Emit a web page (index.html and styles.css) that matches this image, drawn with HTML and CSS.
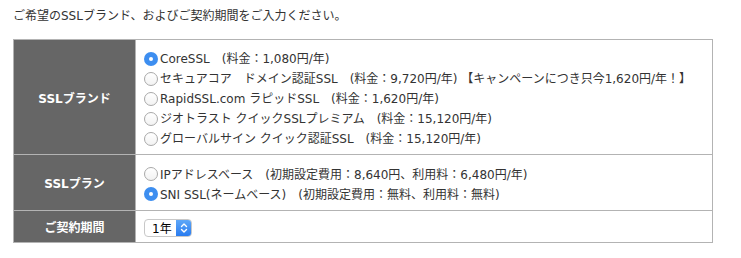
FILE: index.html
```html
<!DOCTYPE html>
<html lang="ja">
<head>
<meta charset="utf-8">
<link rel="stylesheet" href="styles.css">
</head>
<body>
<div class="page">
  <p class="lead">ご希望のSSLブランド、およびご契約期間をご入力ください。</p>
  <table class="form">
    <tr class="row-brand">
      <th>SSLブランド</th>
      <td>
        <label class="opt"><span class="radio on"></span>CoreSSL　(料金：1,080円/年)</label>
        <label class="opt"><span class="radio"></span>セキュアコア　ドメイン認証SSL　(料金：9,720円/年) 【キャンペーンにつき只今1,620円/年！】</label>
        <label class="opt"><span class="radio"></span>RapidSSL.com ラピッドSSL　(料金：1,620円/年)</label>
        <label class="opt"><span class="radio"></span>ジオトラスト クイックSSLプレミアム　(料金：15,120円/年)</label>
        <label class="opt"><span class="radio"></span>グローバルサイン クイック認証SSL　(料金：15,120円/年)</label>
      </td>
    </tr>
    <tr class="row-plan">
      <th>SSLプラン</th>
      <td>
        <label class="opt"><span class="radio"></span>IPアドレスベース　(初期設定費用：8,640円、利用料：6,480円/年)</label>
        <label class="opt"><span class="radio on"></span>SNI SSL(ネームベース)　(初期設定費用：無料、利用料：無料)</label>
      </td>
    </tr>
    <tr class="row-term">
      <th>ご契約期間</th>
      <td>
        <div class="select">
          <span class="select-value">1年</span>
          <span class="select-btn">
            <svg width="8" height="12" viewBox="0 0 8 12"><path d="M1.5 4.5 L4 2 L6.5 4.5 M1.5 7.5 L4 10 L6.5 7.5" fill="none" stroke="#fff" stroke-width="1.4" stroke-linecap="round" stroke-linejoin="round"/></svg>
          </span>
        </div>
      </td>
    </tr>
  </table>
</div>
</body>
</html>
```

FILE: styles.css
```css
html, body {
  margin: 0;
  padding: 0;
  background: #fff;
}
body {
  font-family: "DejaVu Sans", "Noto Sans CJK JP", sans-serif;
  font-size: 12px;
  color: #333;
}
.page {
  padding: 8px 13px 0 13px;
}
.lead {
  margin: 0;
  line-height: 17px;
  height: 31px;
}
.form {
  border-collapse: collapse;
  width: 700px;
}
.form th, .form td {
  border: 1px solid #b3b3b3;
}
.form th {
  width: 121px;
  background: #666;
  color: #fff;
  font-weight: bold;
  text-align: center;
  vertical-align: middle;
  padding: 0;
}
.form td {
  padding: 0 0 0 8px;
  vertical-align: middle;
}
.row-brand td {
  height: 113px;
  padding-top: 1px;
}
.row-plan td {
  height: 54px;
  padding-top: 1px;
}
.row-term td {
  height: 31px;
}
.opt {
  display: flex;
  align-items: center;
  height: 20px;
  white-space: nowrap;
}
.radio {
  box-sizing: border-box;
  width: 14px;
  height: 14px;
  border-radius: 50%;
  border: 1px solid #a9a9a9;
  background: linear-gradient(#fff, #f2f2f2);
  margin: 0 2px 0 0;
  flex: none;
  position: relative;
  top: 1px;
}
.radio.on {
  border: none;
  background: #3d8ef0;
}
.radio.on::after {
  content: "";
  position: absolute;
  left: 5px;
  top: 5px;
  width: 4px;
  height: 4px;
  border-radius: 50%;
  background: #fff;
}
.select {
  display: inline-flex;
  align-items: stretch;
  box-sizing: border-box;
  width: 48px;
  height: 18px;
  border: 1px solid #c8c8c8;
  border-radius: 4px;
  background: #fff;
  overflow: hidden;
  vertical-align: middle;
  position: relative;
  top: 1px;
}
.select-value {
  flex: 1;
  display: flex;
  align-items: center;
  padding-left: 7px;
  font-size: 12px;
  color: #000;
}
.select-btn {
  width: 15px;
  display: flex;
  align-items: center;
  justify-content: center;
  background: linear-gradient(#5ea7f8, #2a7cf0);
}
```
